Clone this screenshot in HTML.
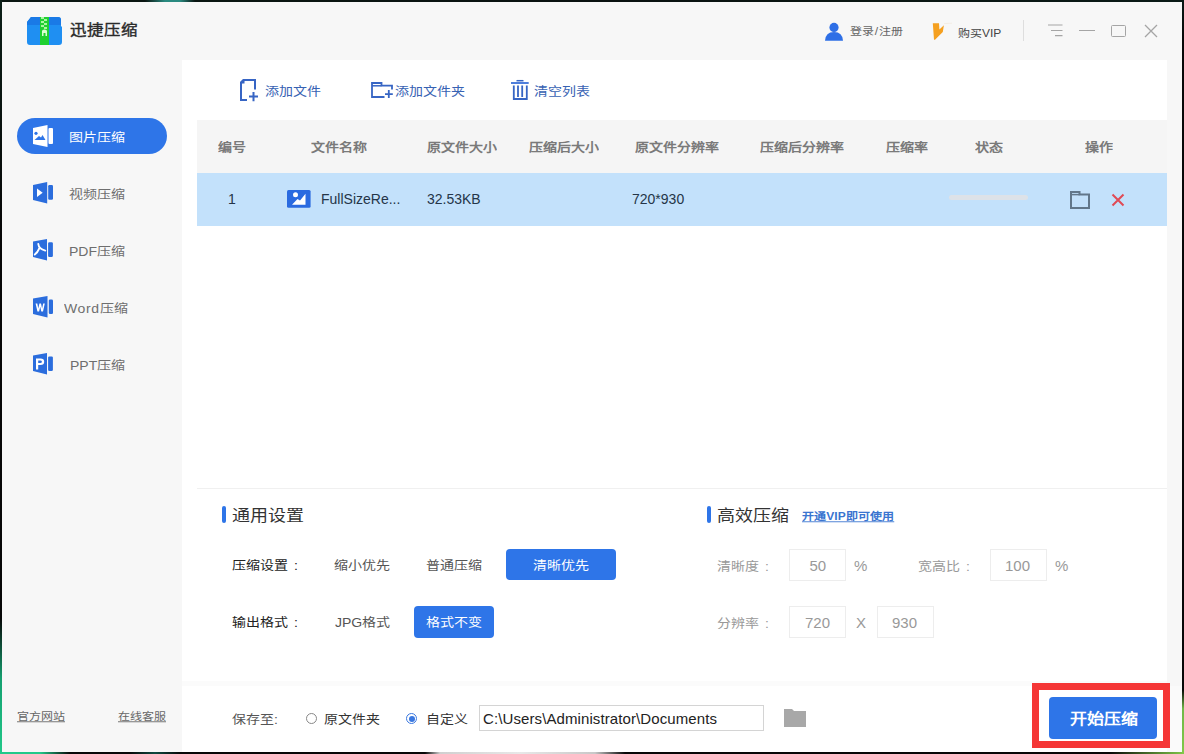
<!DOCTYPE html>
<html lang="zh-CN">
<head>
<meta charset="utf-8">
<style>
*{margin:0;padding:0;box-sizing:border-box}
html,body{width:1184px;height:754px;overflow:hidden;background:#f7f7f7}
body{position:relative;font-family:"Liberation Sans",sans-serif;color:#333}
.a{position:absolute}
.t{position:absolute;white-space:nowrap;line-height:1}
svg{position:absolute;overflow:visible}
.c{transform:scaleY(0.87);transform-origin:50% 50%}
.hd{font-size:14px;font-weight:bold;color:#7a7a7a;top:141px}
.rw{font-size:14px;color:#253548;top:192px}
.ib{fill:#2b6ddd}
</style>
</head>
<body>
<!-- main white panel -->
<div class="a" style="left:182px;top:60px;width:985px;height:692px;background:#fff"></div>

<!-- logo -->
<svg style="left:27px;top:17px" width="35" height="28" viewBox="0 0 35 28">
  <path d="M4 0H31Q34 0 34 3V9L35 10V25Q35 28 32 28H3Q0 28 0 25V5Z" fill="#1f8ff2"/>
  <path d="M4 0H31Q34 0 34 3V8H0V5Z" fill="#1a7ae6"/>
  <rect x="13" y="0" width="9" height="28" fill="#1fd030"/>
  <g fill="#a8f5a0">
    <rect x="14" y="0" width="3" height="2"/><rect x="17" y="2" width="3" height="2"/>
    <rect x="14" y="4" width="3" height="2"/><rect x="17" y="6" width="3" height="2"/>
    <rect x="14" y="8" width="3" height="2"/><rect x="17" y="10" width="3" height="2"/>
  </g>
  <path d="M15 19V14Q15 12.5 17.5 12.5Q20 12.5 20 14V19H18.5V16H16.5V19Z" fill="#d8ffd0"/>
</svg>
<div class="c t" style="left:70px;top:22px;font-size:16.5px;color:#2a2a2a;-webkit-text-stroke:0.4px #2a2a2a">迅捷压缩</div>

<!-- title bar right -->
<svg style="left:825px;top:23px" width="18" height="18" viewBox="0 0 18 18">
  <circle cx="9" cy="4.4" r="4.6" fill="#2e6fe6"/>
  <path d="M0 17.8Q0.5 9 9 9Q17.5 9 18 17.8Z" fill="#2e6fe6"/>
</svg>
<div class="c t" style="left:850px;top:26px;font-size:12px;color:#666;letter-spacing:0.4px">登录/注册</div>
<svg style="left:932px;top:23px" width="20" height="18" viewBox="0 0 20 18">
  <path d="M0.8 0.2H7L7.4 6.4L11.9 2.2L10.8 9L3 16.7H2Z" fill="#f5a020"/>
  <path d="M12 0.6L20 0.2" stroke="#f0e8dc" stroke-width="0.7"/>
</svg>
<div class="c t" style="left:958px;top:27.5px;font-size:12px;color:#444">购买VIP</div>
<div class="a" style="left:1023px;top:20px;width:1px;height:21px;background:#dedede"></div>
<svg style="left:1048px;top:24px" width="15" height="13" viewBox="0 0 15 13">
  <path d="M0 1H14.5M3 6.5H14.5M7 11.7H14.5" stroke="#a5a5a5" stroke-width="1.2" fill="none"/>
</svg>
<div class="a" style="left:1079px;top:30px;width:16px;height:1.3px;background:#a5a5a5"></div>
<div class="a" style="left:1111px;top:25px;width:15px;height:12px;border:1.3px solid #a5a5a5;border-radius:1.5px"></div>
<svg style="left:1145px;top:25px" width="12" height="12" viewBox="0 0 12 12">
  <path d="M0 0L12 12M12 0L0 12" stroke="#a5a5a5" stroke-width="1.3"/>
</svg>

<!-- sidebar -->
<div class="a" style="left:17px;top:118px;width:150px;height:36px;border-radius:18px;background:#2e75e8"></div>
<!-- icon: image (active, white) -->
<svg style="left:33px;top:125px" width="21" height="22" viewBox="0 0 21 22">
  <path d="M0 3L14.5 0V22L0 19Z" fill="#fff"/>
  <rect x="15.5" y="3" width="4.5" height="16" rx="1" fill="#fff"/>
  <circle cx="3" cy="8.3" r="1.6" fill="#2e75e8"/>
  <path d="M1.5 15L6 11L8 12.5L9.5 10L12.5 15Z" fill="#2e75e8"/>
</svg>
<div class="c t" style="left:69px;top:131px;font-size:14px;color:#fff">图片压缩</div>
<!-- video -->
<svg style="left:33px;top:182px" width="21" height="22" viewBox="0 0 21 22">
  <path d="M0 3L14.2 0V21.5L0 18Z" class="ib"/>
  <rect x="15.2" y="3" width="4.8" height="14.8" rx="1.2" class="ib"/>
  <path d="M4 6.5V15L9.7 10.8Z" fill="#fff"/>
</svg>
<div class="c t" style="left:69px;top:188px;font-size:14px;color:#6e6e6e">视频压缩</div>
<!-- pdf -->
<svg style="left:33px;top:239px" width="21" height="22" viewBox="0 0 21 22">
  <path d="M0 2.5L14 0V21.5L0 18Z" class="ib"/>
  <rect x="15.1" y="3.2" width="4.8" height="14.8" rx="1.2" class="ib"/>
  <path d="M5.3 5Q5.8 10 12.3 11.6M6.4 9.2Q4.6 13.6 1.8 15.6" stroke="#fff" stroke-width="1.9" fill="none" stroke-linecap="round"/>
</svg>
<div class="c t" style="left:69px;top:245px;font-size:14px;color:#6e6e6e">PDF压缩</div>
<!-- word -->
<svg style="left:33px;top:296px" width="21" height="22" viewBox="0 0 21 22">
  <path d="M0 2.5L14.5 0V21.5L0 18Z" class="ib"/>
  <rect x="15.8" y="3.5" width="4.2" height="14.5" rx="1.2" class="ib"/>
  <path d="M2.6 7.5H4.3L5.3 12.5L6.4 7.5H8L9.1 12.5L10.2 7.5H11.8L10 15.5H8.3L7.2 10.8L6.1 15.5H4.4Z" fill="#fff"/>
</svg>
<div class="c t" style="left:64px;top:302px;font-size:14px;color:#6e6e6e;letter-spacing:0.6px">Word<span style="letter-spacing:0">压缩</span></div>
<!-- ppt -->
<svg style="left:33px;top:353px" width="21" height="22" viewBox="0 0 21 22">
  <path d="M0 2.5L14 0V21.5L0 18Z" class="ib"/>
  <rect x="15.1" y="3.4" width="4.8" height="14.6" rx="1.2" class="ib"/>
  <path d="M3 16.5V5.5H7.5Q11.2 5.5 11.2 8.8Q11.2 12 7.5 12H5.2V16.5Z M5.2 7.4V10.1H7.3Q8.9 10.1 8.9 8.75Q8.9 7.4 7.3 7.4Z" fill="#fff" fill-rule="evenodd"/>
</svg>
<div class="c t" style="left:70px;top:359px;font-size:14px;color:#6e6e6e">PPT压缩</div>
<div class="c t" style="left:17px;top:711px;font-size:12px;color:#666;text-decoration:underline">官方网站</div>
<div class="c t" style="left:118px;top:711px;font-size:12px;color:#666;text-decoration:underline">在线客服</div>

<!-- toolbar -->
<svg style="left:240px;top:79px" width="19" height="23" viewBox="0 0 19 23">
  <path d="M1 22V4L4 1H15V10.5M1 21H7" stroke="#3765c4" stroke-width="2" fill="none"/>
  <path d="M0 3L3 0H4.5V4.5H0Z" fill="#3765c4"/>
  <path d="M9 17.5H18M13.5 13V22.2" stroke="#3765c4" stroke-width="2" fill="none"/>
</svg>
<div class="c t" style="left:265px;top:85px;font-size:14px;color:#3762b3">添加文件</div>
<svg style="left:371px;top:82px" width="22" height="16" viewBox="0 0 22 16">
  <path d="M1 16V1H10.5V3.7H21V7.5M1 15H13.5" stroke="#3765c4" stroke-width="1.8" fill="none"/>
  <path d="M1 3.8H10.5" stroke="#3765c4" stroke-width="1.5"/>
  <path d="M14 12.2H21.8M17.8 8V16" stroke="#3765c4" stroke-width="1.8" fill="none"/>
</svg>
<div class="c t" style="left:395px;top:85px;font-size:14px;color:#3762b3">添加文件夹</div>
<svg style="left:511px;top:80px" width="18" height="20" viewBox="0 0 18 20">
  <path d="M5.5 0.7H12.5" stroke="#3765c4" stroke-width="1.5"/>
  <path d="M0 3H17.7" stroke="#3a70d8" stroke-width="1.8"/>
  <path d="M2.8 5.5V19H15.8V5.5M7 5.5V17M11.2 5.5V17" stroke="#3765c4" stroke-width="1.8" fill="none"/>
</svg>
<div class="c t" style="left:534px;top:85px;font-size:14px;color:#3762b3">清空列表</div>

<!-- table -->
<div class="a" style="left:197px;top:120px;width:970px;height:53px;background:#f5f5f5"></div>
<div class="a" style="left:197px;top:173px;width:970px;height:53px;background:#c3e1fb"></div>
<div class="c t hd" style="left:218px">编号</div>
<div class="c t hd" style="left:311px">文件名称</div>
<div class="c t hd" style="left:427px">原文件大小</div>
<div class="c t hd" style="left:529px">压缩后大小</div>
<div class="c t hd" style="left:635px">原文件分辨率</div>
<div class="c t hd" style="left:760px">压缩后分辨率</div>
<div class="c t hd" style="left:886px">压缩率</div>
<div class="c t hd" style="left:975px">状态</div>
<div class="c t hd" style="left:1085px">操作</div>

<div class="t rw" style="left:228px">1</div>
<svg style="left:287px;top:190px" width="24" height="18" viewBox="0 0 24 18">
  <rect x="0" y="0" width="23.6" height="17.7" rx="1.5" fill="#2a6ae0"/>
  <circle cx="8.5" cy="4.8" r="2.5" fill="#fff"/>
  <path d="M5 14.7L10.5 9L13 10.5L18.5 3.8V14.7Z" fill="#fff"/>
</svg>
<div class="t rw" style="left:321px">FullSizeRe...</div>
<div class="t rw" style="left:427px">32.53KB</div>
<div class="t rw" style="left:632px">720*930</div>
<div class="a" style="left:949px;top:195px;width:79px;height:5px;border-radius:3px;background:#dde2e8"></div>
<svg style="left:1070px;top:191px" width="20" height="18" viewBox="0 0 20 18">
  <path d="M1 17V1H9.5V3.6H19V17Z" stroke="#62778a" stroke-width="2" fill="none"/>
  <path d="M1 3.6H9.5" stroke="#62778a" stroke-width="1.5"/>
</svg>
<svg style="left:1112px;top:194px" width="12" height="12" viewBox="0 0 12 12">
  <path d="M0.5 0.5L11.5 11.5M11.5 0.5L0.5 11.5" stroke="#e04a55" stroke-width="2"/>
</svg>

<!-- settings -->
<div class="a" style="left:197px;top:488px;width:970px;height:1px;background:#f0f0f0"></div>
<div class="a" style="left:222px;top:506px;width:4px;height:17px;border-radius:2px;background:#2e75e8"></div>
<div class="c t" style="left:232px;top:506.5px;font-size:18px;color:#333">通用设置</div>
<div class="c t" style="left:232px;top:559px;font-size:14px;color:#222">压缩设置<span style="margin-left:6px">:</span></div>
<div class="c t" style="left:334px;top:559px;font-size:14px;color:#555">缩小优先</div>
<div class="c t" style="left:426px;top:559px;font-size:14px;color:#555">普通压缩</div>
<div class="a" style="left:506px;top:549px;width:110px;height:31px;border-radius:4px;background:#2e75e8"></div>
<div class="c t" style="left:533px;top:559px;font-size:14px;color:#fff">清晰优先</div>
<div class="c t" style="left:232px;top:616px;font-size:14px;color:#222">输出格式<span style="margin-left:6px">:</span></div>
<div class="c t" style="left:335px;top:616px;font-size:14px;color:#555">JPG格式</div>
<div class="a" style="left:414px;top:606px;width:80px;height:32px;border-radius:4px;background:#2e75e8"></div>
<div class="c t" style="left:426px;top:616px;font-size:14px;color:#fff">格式不变</div>

<div class="a" style="left:707px;top:506px;width:4px;height:17px;border-radius:2px;background:#2e75e8"></div>
<div class="c t" style="left:717px;top:506.5px;font-size:18px;color:#333">高效压缩</div>
<div class="c t" style="left:802px;top:510.5px;font-size:12px;font-weight:bold;color:#3a74d0;text-decoration:underline;letter-spacing:0.1px">开通VIP即可使用</div>

<div class="c t" style="left:717px;top:560px;font-size:14px;color:#999">清晰度<span style="margin-left:6px">:</span></div>
<div class="a" style="left:789px;top:549px;width:57px;height:32px;border:1px solid #ededed"></div>
<div class="t" style="left:809.5px;top:558px;font-size:15px;color:#999">50</div>
<div class="t" style="left:854px;top:558px;font-size:15px;color:#999">%</div>
<div class="c t" style="left:918px;top:560px;font-size:14px;color:#999">宽高比<span style="margin-left:6px">:</span></div>
<div class="a" style="left:990px;top:549px;width:57px;height:32px;border:1px solid #ededed"></div>
<div class="t" style="left:1005px;top:558px;font-size:15px;color:#999">100</div>
<div class="t" style="left:1055px;top:558px;font-size:15px;color:#999">%</div>
<div class="c t" style="left:717px;top:617px;font-size:14px;color:#999">分辨率<span style="margin-left:6px">:</span></div>
<div class="a" style="left:789px;top:606px;width:57px;height:32px;border:1px solid #ededed"></div>
<div class="t" style="left:805px;top:615px;font-size:15px;color:#999">720</div>
<div class="t" style="left:856px;top:615px;font-size:15px;color:#999">X</div>
<div class="a" style="left:877px;top:606px;width:57px;height:32px;border:1px solid #ededed"></div>
<div class="t" style="left:892px;top:615px;font-size:15px;color:#999">930</div>

<!-- bottom bar -->
<div class="a" style="left:1167px;top:686px;width:15px;height:66px;background:#fafafa"></div>
<div class="a" style="left:182px;top:681px;width:985px;height:5px;background:#fbfbfb"></div>
<div class="c t" style="left:232px;top:713px;font-size:14px;color:#555">保存至:</div>
<div class="a" style="left:306px;top:713px;width:11px;height:11px;border-radius:50%;border:1px solid #888;background:#fff"></div>
<div class="c t" style="left:324px;top:713px;font-size:14px;color:#333">原文件夹</div>
<div class="a" style="left:406px;top:713px;width:11px;height:11px;border-radius:50%;border:1px solid #3a78e0;background:#fff"></div>
<div class="a" style="left:408.5px;top:715.5px;width:6px;height:6px;border-radius:50%;background:#3a78e0"></div>
<div class="c t" style="left:425.5px;top:713px;font-size:14px;color:#333">自定义</div>
<div class="a" style="left:479px;top:705px;width:285px;height:26px;border:1px solid #d4d4d4;background:#fff"></div>
<div class="t" style="left:483px;top:711px;font-size:15px;color:#222;letter-spacing:0.1px">C:\Users\Administrator\Documents</div>
<svg style="left:784px;top:709px" width="22" height="18" viewBox="0 0 22 18">
  <path d="M0 0H8L10 2H22V18H0Z" fill="#a8a8a8"/>
</svg>

<div class="a" style="left:1032px;top:683px;width:138px;height:65px;border:7px solid #f53636"></div>
<div class="a" style="left:1049px;top:697px;width:108px;height:42px;border-radius:4px;background:#2e75e8"></div>
<div class="c t" style="left:1070px;top:711px;font-size:17px;font-weight:bold;color:#fff;transform:scaleY(0.84)">开始压缩</div>

<!-- window borders -->
<div class="a" style="left:0;top:0;width:1184px;height:2px;background:linear-gradient(90deg,#0a1612 0,#0a1612 145px,#2a8a80 165px,#2a8a80 180px,#0a1612 195px,#0a1210 600px,#0a1a16 1184px)"></div>
<div class="a" style="left:0;top:0;width:2px;height:754px;background:linear-gradient(#0c2018,#080808 30%,#080808 82%,#15a070 90%,#22c98a 100%)"></div>
<div class="a" style="left:0;top:752px;width:1184px;height:2px;background:linear-gradient(90deg,#22c98a 0,#22c98a 40px,#080808 70px,#080808 130px,#0e4a40 155px,#080808 180px,#080808 425px,#d0d0d0 440px,#e8e8e8 520px,#c8c8c8 595px,#080808 625px,#080808 1110px,#80c848 1184px)"></div>
<div class="a" style="left:1182px;top:0;width:2px;height:754px;background:linear-gradient(#0a1a16,#080808 5%,#080808 91.5%,#70b848 94%,#80c848 100%)"></div>
</body>
</html>
